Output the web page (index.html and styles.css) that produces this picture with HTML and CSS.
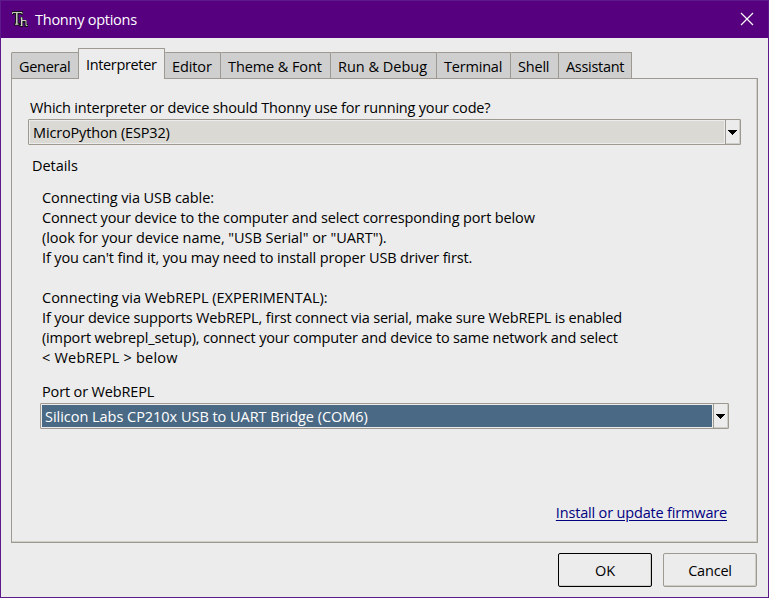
FILE: index.html
```html
<!DOCTYPE html>
<html lang="en">
<head>
<meta charset="utf-8">
<title>Thonny options</title>
<link rel="stylesheet" href="styles.css">
</head>
<body>
<div class="window">
  <header class="titlebar">
    <svg class="logo" width="18" height="18" viewBox="0 0 18 18">
      <path d="M1 1H12V5H10V4H7.500V13H9V15.500H3V13H4V4H3V5H1ZM9 7H12V10H15.500V14H17V17H13.500V13H12V17H8.500V14H9.500V9H9Z" fill="#15151a"/>
      <path d="M1.500 4V2.500H11V4M4 14.200H7.500M9.500 8H11M9.500 15.500H11M11 10.500H15V15.500H16.500" fill="none" stroke="#c9c9bd"/>
      <path d="M5.800 2.500V14.500M10.700 7.500V16" fill="none" stroke="#d5d5c9" stroke-width="1.400"/>
    </svg>
    <span class="title">Thonny options</span>
    <svg class="close" width="14" height="14" viewBox="0 0 14 14"><path d="M1 1L13 13M13 1L1 13" stroke="#fff" stroke-width="1.200"/></svg>
  </header>
  <main class="content">
    <nav class="tabs">
      <div class="tab general">General</div>
      <div class="tab interpreter active">Interpreter</div>
      <div class="tab editor">Editor</div>
      <div class="tab theme">Theme &amp; Font</div>
      <div class="tab run">Run &amp; Debug</div>
      <div class="tab terminal">Terminal</div>
      <div class="tab shell">Shell</div>
      <div class="tab assistant">Assistant</div>
    </nav>
    <section class="pane">
      <div class="question">Which interpreter or device should Thonny use for running your code?</div>
      <div class="combo device">
        <div class="value">MicroPython (ESP32)</div>
        <div class="drop"><svg width="9" height="5" viewBox="0 0 9 5" shape-rendering="crispEdges"><path d="M0 0H9V1H8V2H7V3H6V4H5V5H4V4H3V3H2V2H1V1H0Z"/></svg></div>
      </div>
      <div class="details">Details</div>
      <div class="info">
        <p><span class="l1">Connecting via USB cable:</span><br>
        <span class="l2">Connect your device to the computer and select corresponding port below</span><br>
        <span class="l3">(look for your device name, "USB Serial" or "UART").</span><br>
        <span class="l4">If you can't find it, you may need to install proper USB driver first.</span></p>
        <p><span class="l5">Connecting via WebREPL (EXPERIMENTAL):</span><br>
        <span class="l6">If your device supports WebREPL, first connect via serial, make sure WebREPL is enabled</span><br>
        <span class="l7">(import webrepl_setup), connect your computer and device to same network and select</span><br>
        <span class="l8">&lt; WebREPL &gt; below</span></p>
      </div>
      <div class="port-label">Port or WebREPL</div>
      <div class="combo port">
        <div class="value">Silicon Labs CP210x USB to UART Bridge (COM6)</div>
        <div class="drop"><svg width="9" height="5" viewBox="0 0 9 5" shape-rendering="crispEdges"><path d="M0 0H9V1H8V2H7V3H6V4H5V5H4V4H3V3H2V2H1V1H0Z"/></svg></div>
      </div>
      <a class="firmware">Install or update firmware</a>
    </section>
    <footer class="buttons">
      <button class="ok">OK</button>
      <button class="cancel">Cancel</button>
    </footer>
  </main>
</div>
</body>
</html>
```
FILE: styles.css
```css
* { box-sizing: border-box; }
body { margin: 0; font: 14.5px/20px "Open Sans", "Noto Sans", sans-serif; letter-spacing: -0.2px; color: #000; }
.window { width: 769px; height: 598px; border: 1px solid #5e1a8a; background: #ececec; white-space: nowrap; overflow: hidden; }
.titlebar { height: 37px; background: #56007f; display: flex; align-items: center; padding: 0 14px 0 10px; color: #fff; }
.logo { margin: -1px 6px 0 0; }
.title { flex: 1; letter-spacing: -0.25px; }
.close { margin-top: -1px; }
.content { padding: 10px 11px 0 10px; }
.tabs { display: flex; align-items: flex-end; height: 31px; margin-bottom: -1px; position: relative; }
.tab { height: 27px; padding: 4px 0 0 7px; border: 1px solid #9e9a91; border-left-width: 0; background: #cfcfcf; border-radius: 1px 1px 0 0; }
.tab.active { height: 31px; padding-top: 6px; background: #ececec; border-bottom: 0; }
.general { width: 68px; border-left-width: 1px; letter-spacing: -0.3px; }
.interpreter { width: 87px; margin-left: -1px; border-left-width: 1px; letter-spacing: -0.35px; }
.editor { width: 56px; letter-spacing: -0.1px; }
.theme { width: 110px; letter-spacing: -0.1px; }
.run { width: 106px; letter-spacing: 0; }
.terminal { width: 74px; }
.shell { width: 48px; }
.assistant { width: 73px; letter-spacing: -0.3px; }
.pane { width: 747px; height: 465px; border: 1px solid #9e9a91; box-shadow: inset -1px -1px #cfcdc8; padding: 19px 16px 0; display: flex; flex-direction: column; }
.question { margin-left: 2px; height: 21px; }
.combo { height: 26px; flex: none; display: flex; border: 1px solid #9e9a91; border-radius: 1px; }
.value { flex: 1; margin: 1px; padding-left: 3px; background: #dad9d4; line-height: 23px; }
.device .value { letter-spacing: -0.15px; }
.drop { width: 15px; padding-right: 1px; border-left: 1px solid #9e9a91; box-shadow: inset -1px -1px #cfcdc8; display: flex; align-items: center; justify-content: center; }
.drop svg { margin-left: -1px; }
.details { margin: 11px 0 12px 4px; letter-spacing: -0.05px; }
.info { margin-left: 14px; }
.info p { margin: 0 0 20px; }
.l1 { letter-spacing: -0.08px; }
.l2 { letter-spacing: -0.13px; }
.l3 { letter-spacing: -0.04px; }
.l4 { letter-spacing: -0.14px; }
.l5 { letter-spacing: 0; }
.l6 { letter-spacing: -0.17px; }
.l7 { letter-spacing: -0.16px; }
.l8 { letter-spacing: 0.2px; }
.port-label { margin: -6px 0 1px 14px; letter-spacing: -0.15px; }
.port { margin: 0 12px; }
.port .value { background: #4a6984; color: #fff; letter-spacing: -0.03px; }
.firmware { align-self: flex-end; margin: 74px 14px 0 0; letter-spacing: -0.17px; color: #000080; text-decoration: underline; text-underline-offset: 2px; }
.buttons { display: flex; justify-content: flex-end; gap: 11px; margin-top: 10px; }
.buttons button { width: 94px; height: 34px; padding: 2px 0 0; border: 1px solid #9e9a91; border-radius: 2px; background: #ececec; font: inherit; letter-spacing: inherit; color: #000; box-shadow: inset -1px -1px #cfcdc8; }
.buttons .ok { border-color: #000; }
```
